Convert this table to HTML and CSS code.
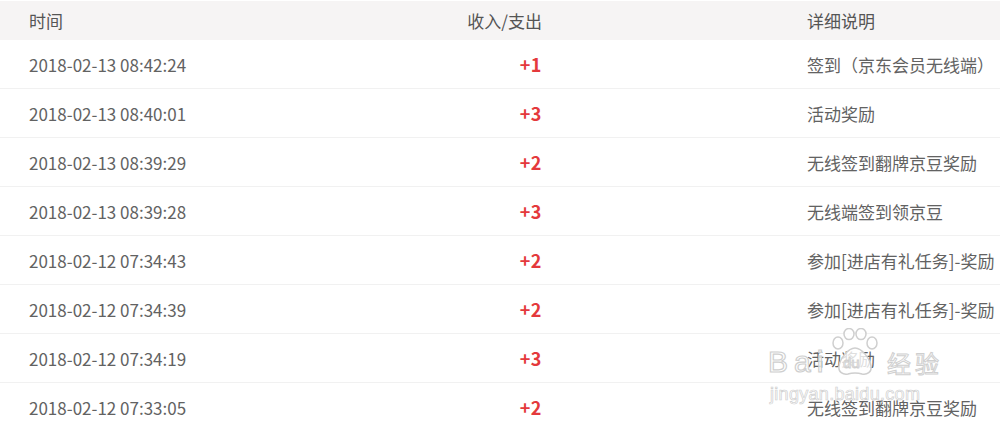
FILE: index.html
```html
<!DOCTYPE html>
<html lang="zh-CN">
<head>
<meta charset="utf-8">
<title>京豆明细</title>
<link rel="stylesheet" href="styles.css">
</head>
<body>
<div class="page">
  <div class="table">
    <div class="row head">
      <div class="c-time">时间</div>
      <div class="c-amt">收入/支出</div>
      <div class="c-desc">详细说明</div>
    </div>
    <div class="row">
      <div class="c-time">2018-02-13 08:42:24</div>
      <div class="c-amt num">+1</div>
      <div class="c-desc">签到（京东会员无线端）</div>
    </div>
    <div class="row">
      <div class="c-time">2018-02-13 08:40:01</div>
      <div class="c-amt num">+3</div>
      <div class="c-desc">活动奖励</div>
    </div>
    <div class="row">
      <div class="c-time">2018-02-13 08:39:29</div>
      <div class="c-amt num">+2</div>
      <div class="c-desc">无线签到翻牌京豆奖励</div>
    </div>
    <div class="row">
      <div class="c-time">2018-02-13 08:39:28</div>
      <div class="c-amt num">+3</div>
      <div class="c-desc">无线端签到领京豆</div>
    </div>
    <div class="row">
      <div class="c-time">2018-02-12 07:34:43</div>
      <div class="c-amt num">+2</div>
      <div class="c-desc">参加[进店有礼任务]-奖励</div>
    </div>
    <div class="row">
      <div class="c-time">2018-02-12 07:34:39</div>
      <div class="c-amt num">+2</div>
      <div class="c-desc">参加[进店有礼任务]-奖励</div>
    </div>
    <div class="row">
      <div class="c-time">2018-02-12 07:34:19</div>
      <div class="c-amt num">+3</div>
      <div class="c-desc">活动奖励</div>
    </div>
    <div class="row">
      <div class="c-time">2018-02-12 07:33:05</div>
      <div class="c-amt num">+2</div>
      <div class="c-desc">无线签到翻牌京豆奖励</div>
    </div>
  </div>
  <div class="watermark">
    <span class="wm-bai">Bai</span>
    <svg class="wm-paw" viewBox="0 0 54 48" width="54" height="48"><g fill="rgba(255,255,255,0.8)" stroke="#cfcfcf" stroke-width="1.5"><ellipse cx="10" cy="15" rx="5" ry="6"/><ellipse cx="21" cy="6" rx="5" ry="5.5"/><ellipse cx="33" cy="6" rx="5" ry="5.5"/><ellipse cx="44" cy="15" rx="5" ry="6"/><path d="M27 20c-7 0-15 11-16 18c-1 6 4 9 9 8c3-1 5-1 7-1s4 0 7 1c5 1 10-2 9-8c-1-7-9-18-16-18z"/></g></svg>
    <span class="wm-du">du</span>
    <span class="wm-cn">经验</span>
    <span class="wm-url">jingyan.baidu.com</span>
  </div>
</div>
</body>
</html>
```
FILE: styles.css
```css
html, body {
  margin: 0;
  padding: 0;
  background: #fff;
}

.page {
  position: relative;
  width: 1000px;
  height: 431px;
  overflow: hidden;
  padding-top: 1px;
  box-sizing: border-box;
  font-family: "Noto Sans CJK SC", "Microsoft YaHei", sans-serif;
  font-size: 17px;
  color: #626262;
}

.table {
  display: flex;
  flex-direction: column;
}

.row {
  display: grid;
  grid-template-columns: 442px 100px 1fr;
  align-items: center;
  height: 48px;
  border-bottom: 1px solid #f1f1f1;
  box-sizing: content-box;
}

.row.head {
  height: 39px;
  background: #f6f4f4;
  border-bottom: none;
  color: #555;
}

.c-time {
  padding-left: 29px;
}

.c-amt {
  text-align: right;
}

.c-desc {
  padding-left: 265px;
  white-space: nowrap;
}

.num {
  color: #e4393c;
  font-weight: 700;
  font-size: 18px;
  letter-spacing: 0.5px;
}

.watermark {
  position: absolute;
  left: 768px;
  top: 328px;
  width: 232px;
  height: 103px;
  pointer-events: none;
  color: rgba(255, 255, 255, 0.8);
}

.wm-bai,
.wm-du,
.wm-cn,
.wm-url {
  position: absolute;
  line-height: 1;
  white-space: nowrap;
}

.wm-bai {
  left: 0;
  top: 19px;
  font-family: "Liberation Sans", sans-serif;
  font-size: 30px;
  letter-spacing: 6px;
  -webkit-text-stroke: 1.2px #cfcfcf;
}

.wm-paw {
  position: absolute;
  left: 60px;
  top: 0;
}

.wm-du {
  left: 75px;
  top: 27px;
  font-family: "Liberation Sans", sans-serif;
  font-size: 15px;
  -webkit-text-stroke: 0.9px #cfcfcf;
}

.wm-cn {
  left: 119px;
  top: 23px;
  font-family: "Noto Sans CJK SC", sans-serif;
  font-size: 24px;
  letter-spacing: 4px;
  -webkit-text-stroke: 1px #cfcfcf;
}

.wm-url {
  left: 2px;
  top: 57px;
  font-family: "Liberation Sans", sans-serif;
  font-size: 18px;
  letter-spacing: 0.3px;
  -webkit-text-stroke: 0.7px #cfcfcf;
}
```
